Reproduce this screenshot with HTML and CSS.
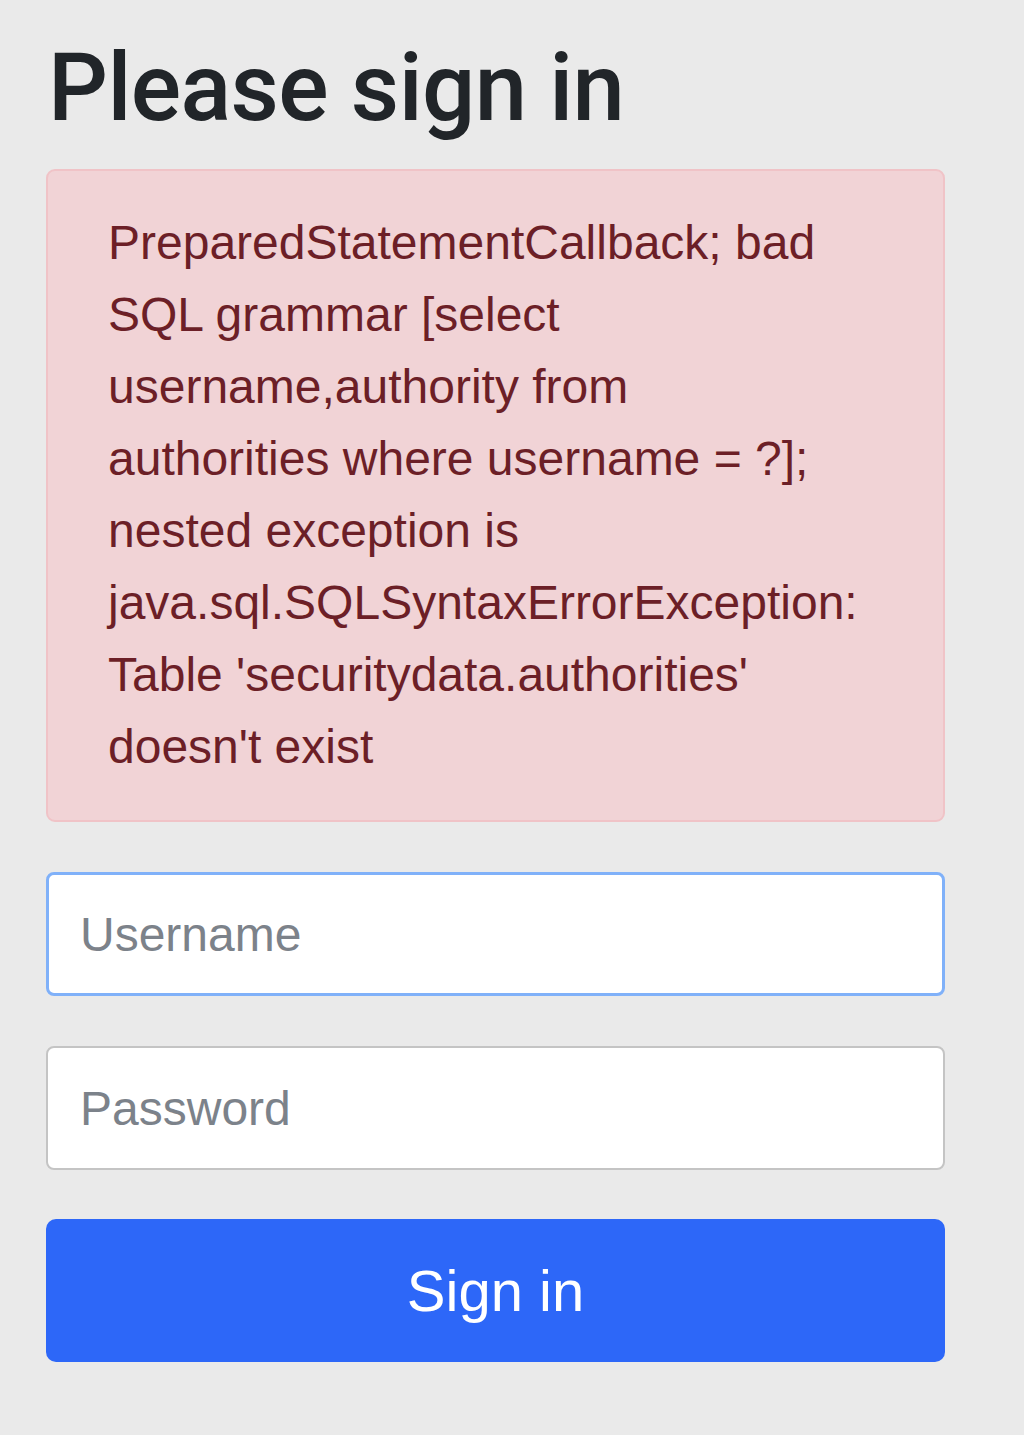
FILE: index.html
```html
<!DOCTYPE html>
<html lang="en">
<head>
<meta charset="utf-8">
<title>Please sign in</title>
<link rel="stylesheet" href="styles.css">
</head>
<body>
<div class="container">
  <form class="form-signin">
    <h2 class="form-signin-heading">Please sign in</h2>
    <div class="alert alert-danger">PreparedStatementCallback; bad SQL grammar [select username,authority from authorities where username = ?]; nested exception is java.sql.SQLSyntaxErrorException: Table 'securitydata.authorities' doesn't exist</div>
    <p class="field">
      <input type="text" class="form-control form-control-focus" placeholder="Username">
    </p>
    <p class="field">
      <input type="password" class="form-control" placeholder="Password">
    </p>
    <button class="btn-primary" type="button">Sign in</button>
  </form>
</div>
</body>
</html>
```

FILE: styles.css
```css
html, body {
  margin: 0;
  padding: 0;
}

body {
  background: #eaeaea;
  font-family: "Liberation Sans", Arial, sans-serif;
  color: #212529;
}

.container {
  padding: 0 0 0 46px;
  width: 899px;
}

.form-signin {
  display: flex;
  flex-direction: column;
}

.form-signin-heading {
  font-family: Roboto, "Liberation Sans", sans-serif;
  font-weight: 500;
  font-size: 94px;
  line-height: 94px;
  letter-spacing: -0.6px;
  margin: 41px 0 34px 2px;
  color: #212529;
}

.alert {
  box-sizing: border-box;
  background: #f1d3d6;
  border: 2px solid #f0c3c7;
  border-radius: 9px;
  color: #6c1f27;
  font-size: 48px;
  line-height: 72px;
  padding: 36px 82px 37px 60px;
  height: 653px;
}

.field {
  margin: 50px 0 0 0;
}

.form-control {
  box-sizing: border-box;
  display: block;
  width: 100%;
  height: 124px;
  margin: 0;
  padding: 0 0 0 32px;
  background: #fff;
  border: 2px solid #c4c4c4;
  border-radius: 8px;
  font-family: "Liberation Sans", Arial, sans-serif;
  font-size: 48px;
  color: #212529;
  outline: none;
}

.form-control-focus {
  border: 3px solid #80b1f9;
  padding-left: 31px;
}

.form-control::placeholder {
  color: #7c828a;
  opacity: 1;
}

.btn-primary {
  box-sizing: border-box;
  margin-top: 49px;
  width: 100%;
  height: 143px;
  border: 0;
  border-radius: 10px;
  background: #2d67f8;
  color: #fff;
  font-family: "Liberation Sans", Arial, sans-serif;
  font-size: 58px;
  padding: 0;
}
```
